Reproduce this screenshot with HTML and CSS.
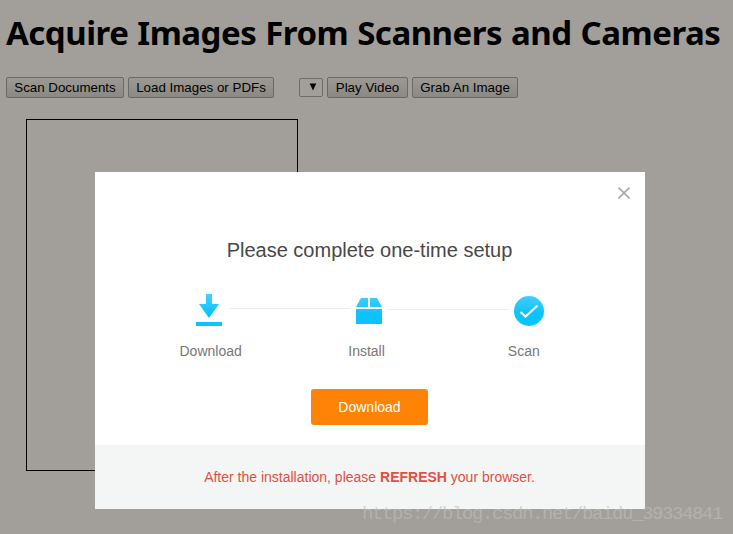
FILE: index.html
```html
<!DOCTYPE html>
<html lang="en">
<head>
<meta charset="utf-8">
<title>Acquire Images From Scanners and Cameras</title>
<link rel="stylesheet" href="styles.css">
</head>
<body>
<main class="page">
  <h1 class="title">Acquire Images From Scanners and Cameras</h1>
  <div class="toolbar">
    <button class="tool scan">Scan Documents</button>
    <button class="tool load">Load Images or PDFs</button>
    <div class="source"><svg width="8" height="8" viewBox="0 0 8 8"><path d="M.7.5h6.6L4 7.5z"/></svg></div>
    <button class="tool play">Play Video</button>
    <button class="tool grab">Grab An Image</button>
  </div>
  <div class="viewer"></div>
</main>
<section class="dialog">
  <svg class="close" width="12" height="12" viewBox="0 0 12 12"><path d="M.5.5l11 11M11.5.5l-11 11"/></svg>
  <h2 class="heading">Please complete one-time setup</h2>
  <svg class="steps" width="350" height="36" viewBox="0 0 350 36">
    <defs>
      <linearGradient id="sky" gradientUnits="userSpaceOnUse" x1="0" y1="5" x2="0" y2="24">
        <stop offset="0" stop-color="#44ceff"/><stop offset="1" stop-color="#0bc3ff"/>
      </linearGradient>
    </defs>
    <path class="line" d="M35 18.5h120M193 19.5h120"/>
    <g fill="url(#sky)">
      <path d="M11 4h6v10h7L14 28 4 14h7z"/>
      <path d="M1 32h26v4H1z"/>
      <path d="M166 8h7v9h-12zM175 8h7l5 9h-12zM161 19h26v15h-26z"/>
      <circle cx="334" cy="21" r="15"/>
    </g>
    <path class="check" d="M325.5 22l5 4.5 12-11"/>
  </svg>
  <div class="labels"><span>Download</span><span>Install</span><span>Scan</span></div>
  <button class="download">Download</button>
  <p class="note">After the installation, please <b>REFRESH</b> your browser.</p>
</section>
<div class="watermark">https://blog.csdn.net/baidu_39334841</div>
</body>
</html>
```
FILE: styles.css
```css
* { box-sizing: border-box; }
body {
  margin: 0;
  width: 733px;
  height: 534px;
  overflow: hidden;
  position: relative;
  background: #a29f9a;
  font-family: "Liberation Sans", Arial, sans-serif;
}
.page { padding: 10px 0 0 6px; }
.title {
  margin: 0;
  height: 67px;
  font: 700 33px/46px "Noto Sans", "Open Sans", sans-serif;
  letter-spacing: -0.5px;
  word-spacing: 0.9px;
  white-space: nowrap;
  color: #000;
}
.toolbar { display: flex; align-items: center; height: 21px; }
.tool {
  height: 21px;
  padding: 0;
  margin-right: 4px;
  border: 1px solid #6b6966;
  border-radius: 2px;
  background: linear-gradient(#9c9994, #8b8984);
  color: #000;
  font: 13.33px/17px "Liberation Sans", Arial, sans-serif;
  white-space: nowrap;
}
.scan { width: 118px; }
.load { width: 146px; margin-right: 25px; }
.play { width: 81px; }
.grab { width: 106px; }
.source {
  display: flex;
  justify-content: flex-end;
  align-items: center;
  width: 24px;
  height: 19px;
  padding: 0 5px 1px 0;
  margin-right: 4px;
  border: 1px solid #6e6c69;
  border-radius: 2px;
}
.viewer {
  width: 272px;
  height: 352px;
  margin: 21px 0 0 20px;
  border: 1px solid #000;
}
.dialog {
  position: absolute;
  left: 95px;
  top: 172px;
  width: 550px;
  height: 337px;
  display: flex;
  flex-direction: column;
  background: #fff;
}
.close {
  position: absolute;
  left: 523px;
  top: 15px;
  fill: none;
  stroke: #aaa9a2;
  stroke-width: 1.6;
}
.heading {
  margin: 66px 1px 0 0;
  font-size: 20px;
  font-weight: 400;
  line-height: 24px;
  text-align: center;
  color: #484848;
}
.steps { display: block; margin: 28px 0 0 100px; }
.line { stroke: #ececec; fill: none; }
.check { stroke: #fff; stroke-width: 2.2; fill: none; }
.labels {
  display: flex;
  margin: 17px 0 0 84.5px;
  font-size: 14px;
  line-height: 16px;
  color: #777;
}
.labels span { margin-right: 106.5px; }
.labels span:nth-child(2) { margin-right: 123px; }
.download {
  width: 117px;
  height: 36px;
  margin: 30px 0 0 216px;
  padding: 0;
  border: 0;
  border-radius: 3px;
  background: #ff8307;
  color: #fff;
  font: 14px/36px "Liberation Sans", Arial, sans-serif;
}
.note {
  height: 64px;
  margin: 20px 0 0;
  padding-right: 1px;
  background: #f4f6f5;
  color: #e34f43;
  font-size: 14px;
  line-height: 64px;
  text-align: center;
}
.watermark {
  position: absolute;
  left: 362px;
  top: 503px;
  font: 19px/22px "Liberation Mono", monospace;
  letter-spacing: -1.4px;
  white-space: nowrap;
  color: rgba(190, 190, 187, 0.6);
}
```
